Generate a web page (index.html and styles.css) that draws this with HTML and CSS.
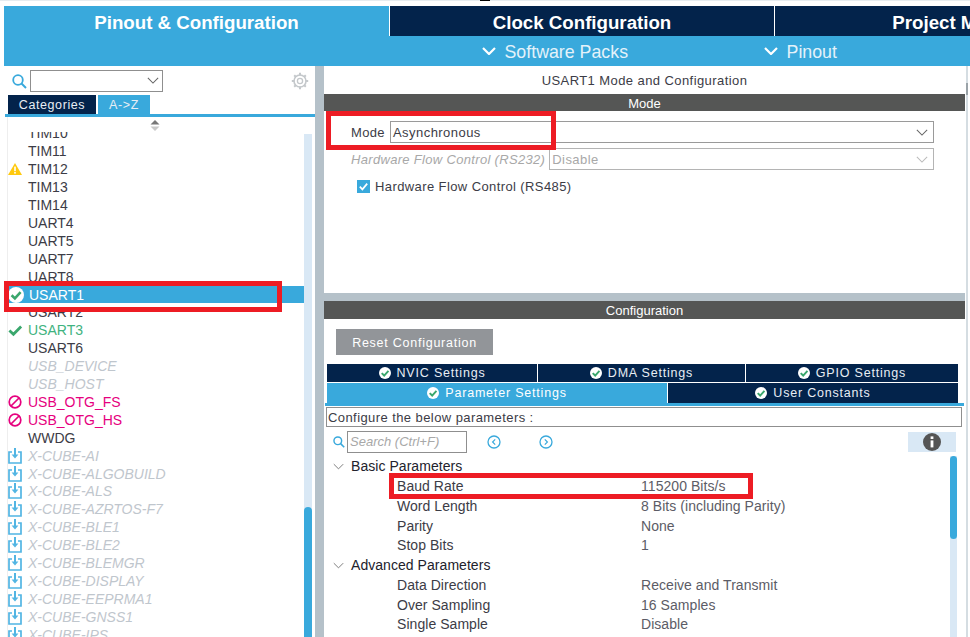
FILE: index.html
```html
<!DOCTYPE html>
<html lang="en">
<head>
<meta charset="utf-8">
<title>USART1 Mode and Configuration</title>
<link rel="stylesheet" href="styles.css">
</head>
<body>
<svg class="defs" aria-hidden="true">
  <symbol id="i-ok" viewBox="0 0 16 16"><circle cx="8" cy="8" r="8" fill="#fff"/><path d="M3.6 8.2 6.9 11.4 12.6 5.2" fill="none" stroke="#3aa76d" stroke-width="2.6"/></symbol>
  <symbol id="i-check" viewBox="0 0 16 16"><path d="M1.5 8 5.8 12 14 3.8" fill="none" stroke="#3aa76d" stroke-width="3"/></symbol>
  <symbol id="i-warn" viewBox="0 0 14 12"><path d="M7 0 14 12H0Z" fill="#ffc90e"/><rect x="6.2" y="3.6" width="1.6" height="4.6" fill="#fff"/><rect x="6.2" y="9" width="1.6" height="1.6" fill="#fff"/></symbol>
  <symbol id="i-no" viewBox="0 0 14 14"><circle cx="7" cy="7" r="5.8" fill="none" stroke="#e6007e" stroke-width="1.7"/><path d="M3 11 11 3" stroke="#e6007e" stroke-width="1.7"/></symbol>
  <symbol id="i-dl" viewBox="0 0 14 16"><path d="M4 4H1V15H13V4H10" fill="none" stroke="#52b5e3" stroke-width="1.7"/><path d="M7 0V9" stroke="#52b5e3" stroke-width="2"/><path d="M3.6 6.6 7 10.6 10.4 6.6Z" fill="#52b5e3"/></symbol>
  <symbol id="i-chev" viewBox="0 0 14 8"><path d="M1 1 7 7 13 1" fill="none" stroke="currentColor" stroke-width="1.2"/></symbol>
  <symbol id="i-chev-bold" viewBox="0 0 14 8"><path d="M1 1 7 7 13 1" fill="none" stroke="currentColor" stroke-width="2.2"/></symbol>
  <symbol id="i-search" viewBox="0 0 15 15"><circle cx="6" cy="6" r="4.8" fill="none" stroke="#39a9dc" stroke-width="1.8"/><path d="M9.5 9.5 14 14" stroke="#39a9dc" stroke-width="2"/></symbol>
</svg>
<div class="page">
  <div class="topstrip"><span class="topmark"></span></div>
  <header class="header">
    <nav class="maintabs">
      <div class="maintab maintab-on">Pinout &amp; Configuration</div>
      <div class="maintab">Clock Configuration</div>
      <div class="maintab maintab-last">Project Manager</div>
    </nav>
    <div class="submenu">
      <span class="submenu-item submenu-packs"><svg class="subchev"><use href="#i-chev-bold"/></svg>Software Packs</span>
      <span class="submenu-item submenu-pinout"><svg class="subchev"><use href="#i-chev-bold"/></svg>Pinout</span>
    </div>
  </header>
  <main class="main">
    <aside class="left">
      <div class="leftbar">
        <svg class="leftsearch"><use href="#i-search"/></svg>
        <div class="combo"><svg class="chev"><use href="#i-chev"/></svg></div>
        <svg class="gear" viewBox="0 0 18 18"><g fill="none" stroke="#c4c8cb"><circle cx="9" cy="9" r="2.6" stroke-width="1.3"/><circle cx="9" cy="9" r="6" stroke-width="1.6"/><path d="M9 .8V3.4M9 14.6V17.2M.8 9H3.4M14.6 9H17.2M3.2 3.2 5 5M13 13 14.8 14.8M14.8 3.2 13 5M5 13 3.2 14.8" stroke-width="2"/></g></svg>
      </div>
      <div class="lefttabs">
        <span class="lefttab">Categories</span>
        <span class="lefttab lefttab-on">A-&gt;Z</span>
      </div>
      <div class="listwrap">
        <div class="listcol">
          <div class="sortrow"><svg class="sort" viewBox="0 0 10 11"><path d="M5 0 9.5 4.5H.5Z" fill="#777"/><path d="M5 11 .5 6.5H9.5Z" fill="#c8c8c8"/></svg></div>
          <div class="listclip">
            <ul class="list">
              <li class="row"><span class="cell"></span>TIM10</li>
              <li class="row"><span class="cell"></span>TIM11</li>
              <li class="row"><span class="cell"><svg class="ic-warn"><use href="#i-warn"/></svg></span>TIM12</li>
              <li class="row"><span class="cell"></span>TIM13</li>
              <li class="row"><span class="cell"></span>TIM14</li>
              <li class="row"><span class="cell"></span>UART4</li>
              <li class="row"><span class="cell"></span>UART5</li>
              <li class="row"><span class="cell"></span>UART7</li>
              <li class="row"><span class="cell"></span>UART8</li>
              <li class="row row-on"><span class="cell"><svg class="ic-ok"><use href="#i-ok"/></svg></span>USART1</li>
              <li class="row"><span class="cell"></span>USART2</li>
              <li class="row row-green"><span class="cell"><svg class="ic-check"><use href="#i-check"/></svg></span>USART3</li>
              <li class="row"><span class="cell"></span>USART6</li>
              <li class="row row-off"><span class="cell"></span>USB_DEVICE</li>
              <li class="row row-off"><span class="cell"></span>USB_HOST</li>
              <li class="row row-pink"><span class="cell"><svg class="ic-no"><use href="#i-no"/></svg></span>USB_OTG_FS</li>
              <li class="row row-pink"><span class="cell"><svg class="ic-no"><use href="#i-no"/></svg></span>USB_OTG_HS</li>
              <li class="row"><span class="cell"></span>WWDG</li>
              <li class="row row-off"><span class="cell"><svg class="ic-dl"><use href="#i-dl"/></svg></span>X-CUBE-AI</li>
              <li class="row row-off"><span class="cell"><svg class="ic-dl"><use href="#i-dl"/></svg></span>X-CUBE-ALGOBUILD</li>
              <li class="row row-off"><span class="cell"><svg class="ic-dl"><use href="#i-dl"/></svg></span>X-CUBE-ALS</li>
              <li class="row row-off"><span class="cell"><svg class="ic-dl"><use href="#i-dl"/></svg></span>X-CUBE-AZRTOS-F7</li>
              <li class="row row-off"><span class="cell"><svg class="ic-dl"><use href="#i-dl"/></svg></span>X-CUBE-BLE1</li>
              <li class="row row-off"><span class="cell"><svg class="ic-dl"><use href="#i-dl"/></svg></span>X-CUBE-BLE2</li>
              <li class="row row-off"><span class="cell"><svg class="ic-dl"><use href="#i-dl"/></svg></span>X-CUBE-BLEMGR</li>
              <li class="row row-off"><span class="cell"><svg class="ic-dl"><use href="#i-dl"/></svg></span>X-CUBE-DISPLAY</li>
              <li class="row row-off"><span class="cell"><svg class="ic-dl"><use href="#i-dl"/></svg></span>X-CUBE-EEPRMA1</li>
              <li class="row row-off"><span class="cell"><svg class="ic-dl"><use href="#i-dl"/></svg></span>X-CUBE-GNSS1</li>
              <li class="row row-off"><span class="cell"><svg class="ic-dl"><use href="#i-dl"/></svg></span>X-CUBE-IPS</li>
            </ul>
          </div>
        </div>
        <div class="track"><div class="thumb"></div></div>
      </div>
    </aside>
    <section class="right">
      <div class="modepane">
        <h1 class="title">USART1 Mode and Configuration</h1>
        <div class="bar">Mode</div>
        <div class="formrow formrow-first">
          <span class="formlabel formlabel-mode">Mode</span>
          <div class="select"><span>Asynchronous</span><svg class="chev"><use href="#i-chev"/></svg></div>
        </div>
        <div class="formrow">
          <span class="formlabel formlabel-off">Hardware Flow Control (RS232)</span>
          <div class="select select-off"><span>Disable</span><svg class="chev"><use href="#i-chev"/></svg></div>
        </div>
        <div class="checkrow">
          <svg class="checkbox" viewBox="0 0 13 13"><rect width="13" height="13" fill="#39a9dc"/><path d="M2.8 6.6 5.4 9.4 10.2 3.6" fill="none" stroke="#fff" stroke-width="1.7"/></svg>
          <span>Hardware Flow Control (RS485)</span>
        </div>
      </div>
      <div class="hsplit"></div>
      <div class="configpane">
        <div class="bar">Configuration</div>
        <div class="resetbtn">Reset Configuration</div>
        <div class="ctabs ctabs-a">
          <div class="ctab"><svg class="ic-tab"><use href="#i-ok"/></svg>NVIC Settings</div>
          <div class="ctab"><svg class="ic-tab"><use href="#i-ok"/></svg>DMA Settings</div>
          <div class="ctab"><svg class="ic-tab"><use href="#i-ok"/></svg>GPIO Settings</div>
        </div>
        <div class="ctabs ctabs-b">
          <div class="ctab ctab-on"><svg class="ic-tab"><use href="#i-ok"/></svg>Parameter Settings</div>
          <div class="ctab"><svg class="ic-tab"><use href="#i-ok"/></svg>User Constants</div>
        </div>
        <div class="blueline"></div>
        <div class="configure">Configure the below parameters :</div>
        <div class="searchrow">
          <svg class="paramsearch"><use href="#i-search"/></svg>
          <div class="searchbox">Search (Ctrl+F)</div>
          <svg class="nav nav-prev" viewBox="0 0 14 14"><circle cx="7" cy="7" r="6" fill="none" stroke="#39a9dc" stroke-width="1.3"/><path d="M8.2 4.4 5.6 7 8.2 9.6" fill="none" stroke="#39a9dc" stroke-width="1.2"/></svg>
          <svg class="nav nav-next" viewBox="0 0 14 14"><circle cx="7" cy="7" r="6" fill="none" stroke="#39a9dc" stroke-width="1.3"/><path d="M5.8 4.4 8.4 7 5.8 9.6" fill="none" stroke="#39a9dc" stroke-width="1.2"/></svg>
          <div class="infobtn"><svg class="info" viewBox="0 0 18 18"><circle cx="9" cy="9" r="9" fill="#555"/><rect x="7.6" y="7.4" width="2.8" height="7" fill="#fff"/><rect x="7.6" y="3.4" width="2.8" height="2.6" fill="#fff"/></svg></div>
        </div>
        <div class="treewrap">
          <div class="tree">
            <div class="group"><svg class="groupchev"><use href="#i-chev"/></svg>Basic Parameters</div>
            <div class="param"><span>Baud Rate</span><span class="val">115200 Bits/s</span></div>
            <div class="param"><span>Word Length</span><span class="val">8 Bits (including Parity)</span></div>
            <div class="param"><span>Parity</span><span class="val">None</span></div>
            <div class="param"><span>Stop Bits</span><span class="val">1</span></div>
            <div class="group"><svg class="groupchev"><use href="#i-chev"/></svg>Advanced Parameters</div>
            <div class="param"><span>Data Direction</span><span class="val">Receive and Transmit</span></div>
            <div class="param"><span>Over Sampling</span><span class="val">16 Samples</span></div>
            <div class="param"><span>Single Sample</span><span class="val">Disable</span></div>
          </div>
          <div class="treetrack"><div class="treethumb"></div></div>
        </div>
      </div>
    </section>
    <div class="edge"><div class="edgeknob"></div></div>
  </main>
  <div class="mark mark-mode"></div>
  <div class="mark mark-usart"></div>
  <div class="mark mark-baud"></div>
</div>
</body>
</html>
```
FILE: styles.css
```css
* { box-sizing: border-box; }
html, body { margin: 0; padding: 0; background: #fff; }
body { font-family: "Liberation Sans", Arial, sans-serif; color: #3c3c46; }
.defs { display: none; }
.page { position: relative; width: 970px; height: 637px; overflow: hidden; }

.topstrip { height: 6px; display: flex; border-top: 1px solid #e6ecf0; position: relative; }
.topmark { width: 10px; height: 1px; margin: -1px 0 0 480px; background: #000; }

.header { margin-left: 4px; }
.maintabs { display: flex; height: 30px; gap: 1px; background: #fff; overflow: hidden; }
.maintab {
  flex: 0 0 384px; background: #03234b; color: #fff;
  font-size: 18.7px; font-weight: bold; line-height: 33px; text-align: center;
}
.maintab-on { flex-basis: 385px; background: #39a9dc; }
.maintab-last { flex-basis: 380px; white-space: nowrap; }
.submenu { display: flex; height: 30px; padding-top: 2px; background: #39a9dc; color: #e4f2fa; font-size: 17.8px; line-height: 28px; }
.submenu-item { display: flex; align-items: center; }
.submenu-packs { margin-left: 478px; }
.submenu-pinout { margin-left: 136px; }
.subchev { width: 14px; height: 8px; margin: -2px 8.5px 0 0; color: #fff; }

.main { display: flex; height: 571px; margin-left: 4px; background: linear-gradient(#b5c1c9, #b5c1c9) 311px 0 / 9px 100% no-repeat; }
.left { width: 311px; display: flex; flex-direction: column; }
.leftbar { display: flex; align-items: center; height: 29px; padding-left: 8px; }
.leftsearch { width: 15px; height: 15px; margin-top: 1px; }
.combo {
  width: 133px; height: 22px; margin-left: 3px;
  border: 1px solid #8f8f8f; display: flex; align-items: center; justify-content: flex-end; padding-right: 3px;
}
.chev { width: 12px; height: 7px; color: #666; flex: none; }
.gear { width: 18px; height: 18px; margin-left: 128px; }
.lefttabs { display: flex; gap: 2px; height: 19px; padding-left: 4px; }
.lefttab {
  background: #03234b; color: #e8eef4; font-size: 12.5px; line-height: 20px;
  width: 88px; text-align: center; letter-spacing: .6px;
}
.lefttab-on { background: #39a9dc; width: 52px; }
.listwrap {
  flex: 1; min-height: 0; display: grid; grid-template-columns: 297px 8px;
  border-top: 3px solid #39a9dc; margin-left: 1px; padding-left: 2px;
}
.listcol { display: flex; flex-direction: column; min-height: 0; border-left: 1px solid #eee; }
.sortrow { height: 15px; padding: 3px 0 0 142px; flex: none; }
.sort { display: block; width: 10px; height: 11px; }
.listclip { flex: 1; min-height: 0; overflow: hidden; }
.list { list-style: none; margin: -7.6px 0 0; padding: 0; }
.row { display: flex; align-items: center; height: 17.92px; font-size: 14px; color: #3c3c46; white-space: nowrap; }
.cell { flex: 0 0 20px; display: flex; align-items: center; }
.row-on { background: #39a9dc; color: #fff; }
.row-on .cell { flex-basis: 21px; }
.row-green { color: #3fb37f; }
.row-off { color: #bfc6cd; font-style: italic; }
.row-pink { color: #e6007e; }
.ic-warn { width: 14px; height: 12px; }
.ic-ok { width: 16px; height: 16px; }
.ic-check { width: 15px; height: 15px; }
.ic-no { width: 14px; height: 14px; }
.ic-dl { width: 14px; height: 16px; }
.track { margin-top: 17px; padding-top: 373px; background: #d9e8f5; }
.thumb { height: 100%; background: #39a9dc; border-radius: 4px 4px 0 0; }

.right { width: 641px; margin-left: 9px; display: flex; flex-direction: column; }
.edge { width: 2px; margin-left: 1px; background: #d5dde2; }
.edgeknob { height: 12px; margin-top: 17px; background: #9aa3a8; }
.modepane { height: 227px; }
.title { margin: 0; height: 28px; font-size: 13px; font-weight: normal; line-height: 29px; text-align: center; letter-spacing: .42px; }
.bar { height: 17px; background: #555655; color: #fff; font-size: 13px; line-height: 20px; text-align: center; }
.formrow { display: flex; gap: 4px; height: 22px; margin: 5px 31px 0 27px; align-items: center; font-size: 13px; }
.formrow-first { margin-top: 10px; }
.formlabel { letter-spacing: .32px; }
.formlabel-mode { width: 35px; }
.formlabel-off { color: #a8a8a8; font-style: italic; }
.select {
  flex: 1; height: 22px; border: 1px solid #9a9a9a; display: flex; align-items: center;
  justify-content: space-between; padding: 0 5px 0 2px; letter-spacing: .45px;
}
.select-off { color: #a8a8a8; border-color: #b4b4b4; }
.select-off .chev { color: #bbb; }
.checkrow { display: flex; align-items: center; gap: 5px; height: 16px; margin: 8px 0 0 33px; font-size: 13px; letter-spacing: .4px; }
.checkbox { width: 13px; height: 13px; }
.hsplit { height: 8px; background: #b5c1c9; }

.configpane { flex: 1; min-height: 0; display: flex; flex-direction: column; }
.configpane .bar { height: 18px; }
.resetbtn {
  width: 157px; height: 26px; margin: 10px 0 0 12px; background: #929599; color: #fff;
  font-size: 12.5px; line-height: 29px; text-align: center; letter-spacing: .75px;
}
.ctabs { display: grid; gap: 1px; margin-left: 3px; width: 631px; }
.ctabs-a { grid-template-columns: 210px 207px 212px; height: 18px; margin-top: 9px; }
.ctabs-b { grid-template-columns: 340px 290px; height: 20px; margin-top: 1px; }
.ctab {
  background: #03234b; color: #e8eef4; font-size: 12.5px; letter-spacing: .8px;
  display: flex; align-items: center; justify-content: center; gap: 6px;
}
.ctab-on { background: #39a9dc; color: #fff; }
.ic-tab { width: 12px; height: 12px; }
.blueline { height: 3px; margin: 0 1px; background: #39a9dc; flex: none; }
.configure {
  height: 20px; margin: 1px 3px 0 2px; border: 1px solid #8f8f8f; padding-left: 1px;
  font-size: 13px; line-height: 20px; letter-spacing: .42px; flex: none;
}
.searchrow { display: flex; align-items: center; height: 22px; margin-top: 4px; flex: none; }
.paramsearch { width: 12px; height: 12px; margin-left: 9px; }
.searchbox {
  width: 120px; height: 22px; margin-left: 2px; border: 1px solid #8f8f8f; padding-left: 2px;
  color: #a8a8a8; font-size: 13px; font-style: italic; line-height: 20px;
}
.nav { width: 14px; height: 14px; }
.nav-prev { margin-left: 20px; }
.nav-next { margin-left: 38px; }
.infobtn { width: 48px; height: 20px; margin-left: 355px; background: #d9e8f5; display: flex; align-items: center; justify-content: center; }
.info { width: 18px; height: 18px; }
.treewrap { flex: 1; min-height: 0; display: flex; margin-top: 3px; }
.tree { width: 626px; padding-top: .4px; font-size: 14px; letter-spacing: .05px; }
.group { display: flex; align-items: center; height: 19.75px; padding-left: 9px; color: #22222c; }
.groupchev { width: 11px; height: 7px; margin-right: 7px; color: #777; }
.param { display: grid; grid-template-columns: 244px 1fr; align-items: center; height: 19.75px; padding-left: 73px; white-space: nowrap; }
.val { color: #5c5c66; }
.treetrack { width: 7px; background: #d9e8f5; }
.treethumb { height: 83px; background: #39a9dc; border-radius: 4px; }

.mark { position: absolute; border: 5px solid #ed1c24; pointer-events: none; }
.mark-mode { left: 326px; top: 111px; width: 230px; height: 39px; }
.mark-usart { left: 4px; top: 281px; width: 278px; height: 31px; }
.mark-baud { left: 389px; top: 473px; width: 364px; height: 26px; }
```
